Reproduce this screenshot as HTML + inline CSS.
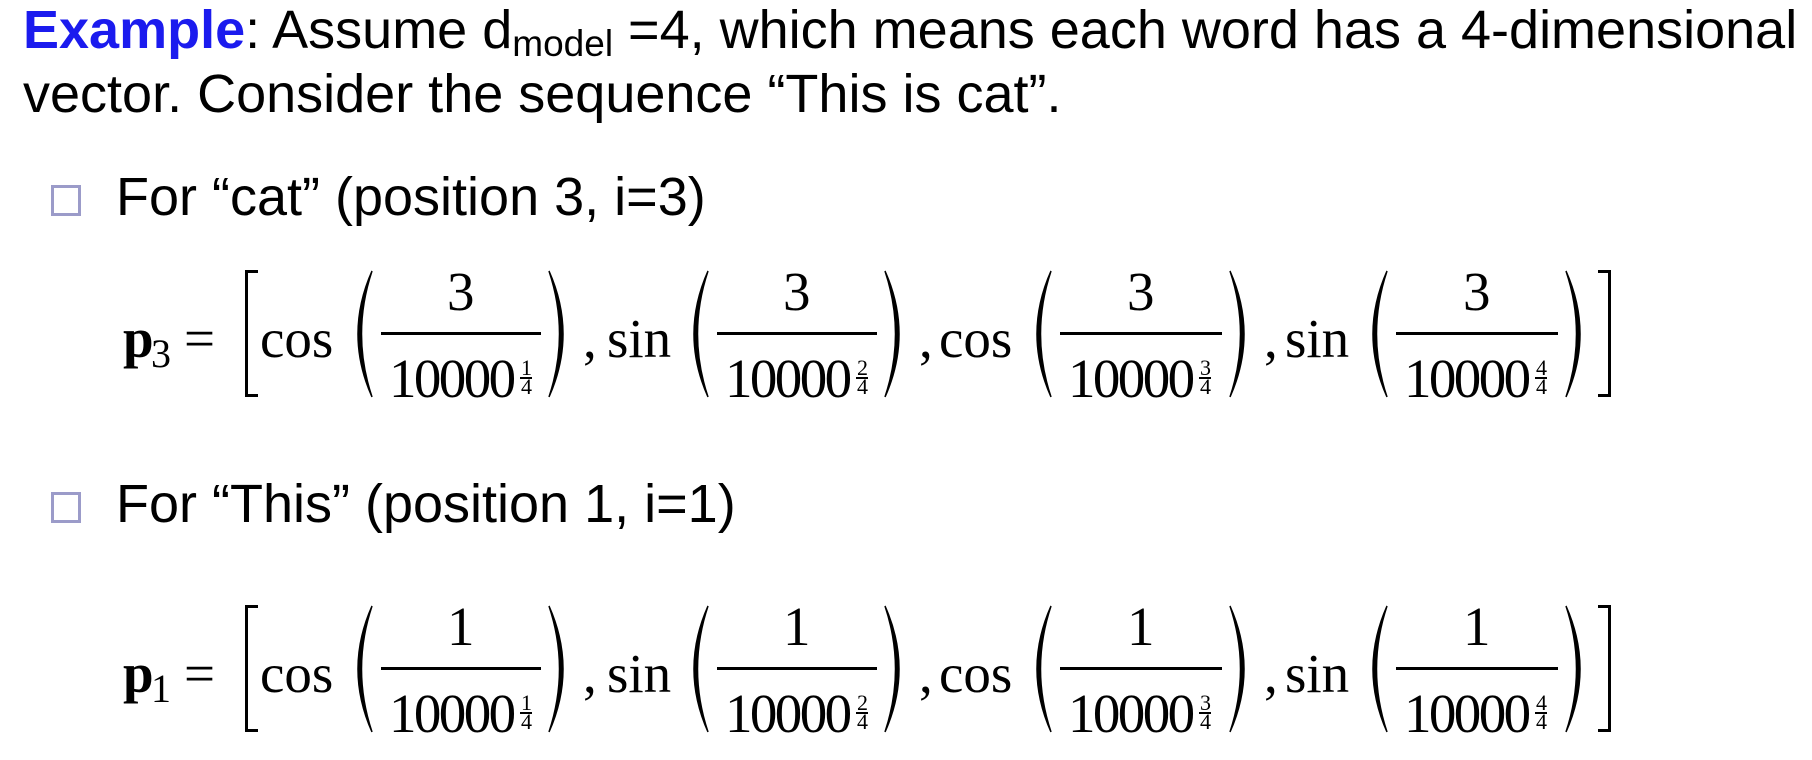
<!DOCTYPE html>
<html><head><meta charset="utf-8"><style>
html,body{margin:0;padding:0;background:#fff;}
body{width:1812px;height:760px;position:relative;overflow:hidden;}
.s{position:absolute;font-family:"Liberation Sans",sans-serif;font-size:54px;line-height:1;color:#000;white-space:nowrap;}
.f{position:absolute;left:0;width:1812px;height:140px;}
.t{position:absolute;font-family:"Liberation Serif",serif;font-size:55px;line-height:1;color:#000;white-space:nowrap;}
.d{letter-spacing:-2.6px;}
.sm{font-size:22px;}
.fl{position:absolute;height:3px;background:#000;top:62px;}
.el{position:absolute;height:1.5px;background:#000;top:107px;width:12px;}
.bl{position:absolute;top:0;height:121px;width:10px;border:3px solid #000;}
.bx{position:absolute;width:24px;height:25px;border:3px solid #9b9bc9;left:51px;}
svg.p{position:absolute;top:0;}
</style></head><body>
<div class="s" style="left:23px;top:3px;"><b style="color:#1b1bee">Example</b>: Assume d<span style="font-size:37px;vertical-align:-8px">model</span> =4, which means each word has a 4-dimensional</div>
<div class="s" style="left:23px;top:67px;">vector. Consider the sequence “This is cat”.</div>

<div class="bx" style="top:185px"></div>
<div class="s" style="left:116px;top:170px;">For “cat” (position 3, i=3)</div>
<div class="bx" style="top:492px"></div>
<div class="s" style="left:116px;top:477px;">For “This” (position 1, i=1)</div>

<div class="f" style="top:270px">
<div class="t" style="left:123px;top:41px;font-weight:bold">p</div>
<div class="t" style="left:151px;top:64px;font-size:40px">3</div>
<div class="t" style="left:184px;top:41px">=</div>
<div class="bl" style="left:245px;border-right:none"></div>
<div class="bl" style="left:1598px;border-left:none"></div>

<div class="t" style="left:260px;top:41px">cos</div>
<svg class="p" style="left:347px" width="28" height="128"><path d="M25,1 Q-3,64 25,127 Q4,64 25,1Z" stroke="#000" stroke-width="1.5" fill="#000"/></svg>
<div class="fl" style="left:381px;width:160px"></div>
<div class="t" style="left:447px;top:-6px">3</div>
<div class="t d" style="left:389px;top:81px">10000</div>
<div class="t sm" style="left:521px;top:87px">1</div><div class="el" style="left:520px"></div><div class="t sm" style="left:521px;top:106px">4</div>
<svg class="p" style="left:546px" width="28" height="128"><path d="M3,1 Q31,64 3,127 Q24,64 3,1Z" stroke="#000" stroke-width="1.5" fill="#000"/></svg>
<div class="t" style="left:583px;top:41px">,</div>

<div class="t" style="left:607px;top:41px">sin</div>
<svg class="p" style="left:683px" width="28" height="128"><path d="M25,1 Q-3,64 25,127 Q4,64 25,1Z" stroke="#000" stroke-width="1.5" fill="#000"/></svg>
<div class="fl" style="left:717px;width:160px"></div>
<div class="t" style="left:783px;top:-6px">3</div>
<div class="t d" style="left:725px;top:81px">10000</div>
<div class="t sm" style="left:857px;top:87px">2</div><div class="el" style="left:856px"></div><div class="t sm" style="left:857px;top:106px">4</div>
<svg class="p" style="left:882px" width="28" height="128"><path d="M3,1 Q31,64 3,127 Q24,64 3,1Z" stroke="#000" stroke-width="1.5" fill="#000"/></svg>
<div class="t" style="left:919px;top:41px">,</div>

<div class="t" style="left:939px;top:41px">cos</div>
<svg class="p" style="left:1026px" width="28" height="128"><path d="M25,1 Q-3,64 25,127 Q4,64 25,1Z" stroke="#000" stroke-width="1.5" fill="#000"/></svg>
<div class="fl" style="left:1060px;width:162px"></div>
<div class="t" style="left:1127px;top:-6px">3</div>
<div class="t d" style="left:1068px;top:81px">10000</div>
<div class="t sm" style="left:1200px;top:87px">3</div><div class="el" style="left:1199px"></div><div class="t sm" style="left:1200px;top:106px">4</div>
<svg class="p" style="left:1227px" width="28" height="128"><path d="M3,1 Q31,64 3,127 Q24,64 3,1Z" stroke="#000" stroke-width="1.5" fill="#000"/></svg>
<div class="t" style="left:1264px;top:41px">,</div>

<div class="t" style="left:1285px;top:41px">sin</div>
<svg class="p" style="left:1362px" width="28" height="128"><path d="M25,1 Q-3,64 25,127 Q4,64 25,1Z" stroke="#000" stroke-width="1.5" fill="#000"/></svg>
<div class="fl" style="left:1396px;width:162px"></div>
<div class="t" style="left:1463px;top:-6px">3</div>
<div class="t d" style="left:1404px;top:81px">10000</div>
<div class="t sm" style="left:1536px;top:87px">4</div><div class="el" style="left:1535px"></div><div class="t sm" style="left:1536px;top:106px">4</div>
<svg class="p" style="left:1563px" width="28" height="128"><path d="M3,1 Q31,64 3,127 Q24,64 3,1Z" stroke="#000" stroke-width="1.5" fill="#000"/></svg>
</div>

<div class="f" style="top:605px">
<div class="t" style="left:123px;top:41px;font-weight:bold">p</div>
<div class="t" style="left:151px;top:64px;font-size:40px">1</div>
<div class="t" style="left:184px;top:41px">=</div>
<div class="bl" style="left:245px;border-right:none"></div>
<div class="bl" style="left:1598px;border-left:none"></div>

<div class="t" style="left:260px;top:41px">cos</div>
<svg class="p" style="left:347px" width="28" height="128"><path d="M25,1 Q-3,64 25,127 Q4,64 25,1Z" stroke="#000" stroke-width="1.5" fill="#000"/></svg>
<div class="fl" style="left:381px;width:160px"></div>
<div class="t" style="left:447px;top:-6px">1</div>
<div class="t d" style="left:389px;top:81px">10000</div>
<div class="t sm" style="left:521px;top:87px">1</div><div class="el" style="left:520px"></div><div class="t sm" style="left:521px;top:106px">4</div>
<svg class="p" style="left:546px" width="28" height="128"><path d="M3,1 Q31,64 3,127 Q24,64 3,1Z" stroke="#000" stroke-width="1.5" fill="#000"/></svg>
<div class="t" style="left:583px;top:41px">,</div>

<div class="t" style="left:607px;top:41px">sin</div>
<svg class="p" style="left:683px" width="28" height="128"><path d="M25,1 Q-3,64 25,127 Q4,64 25,1Z" stroke="#000" stroke-width="1.5" fill="#000"/></svg>
<div class="fl" style="left:717px;width:160px"></div>
<div class="t" style="left:783px;top:-6px">1</div>
<div class="t d" style="left:725px;top:81px">10000</div>
<div class="t sm" style="left:857px;top:87px">2</div><div class="el" style="left:856px"></div><div class="t sm" style="left:857px;top:106px">4</div>
<svg class="p" style="left:882px" width="28" height="128"><path d="M3,1 Q31,64 3,127 Q24,64 3,1Z" stroke="#000" stroke-width="1.5" fill="#000"/></svg>
<div class="t" style="left:919px;top:41px">,</div>

<div class="t" style="left:939px;top:41px">cos</div>
<svg class="p" style="left:1026px" width="28" height="128"><path d="M25,1 Q-3,64 25,127 Q4,64 25,1Z" stroke="#000" stroke-width="1.5" fill="#000"/></svg>
<div class="fl" style="left:1060px;width:162px"></div>
<div class="t" style="left:1127px;top:-6px">1</div>
<div class="t d" style="left:1068px;top:81px">10000</div>
<div class="t sm" style="left:1200px;top:87px">3</div><div class="el" style="left:1199px"></div><div class="t sm" style="left:1200px;top:106px">4</div>
<svg class="p" style="left:1227px" width="28" height="128"><path d="M3,1 Q31,64 3,127 Q24,64 3,1Z" stroke="#000" stroke-width="1.5" fill="#000"/></svg>
<div class="t" style="left:1264px;top:41px">,</div>

<div class="t" style="left:1285px;top:41px">sin</div>
<svg class="p" style="left:1362px" width="28" height="128"><path d="M25,1 Q-3,64 25,127 Q4,64 25,1Z" stroke="#000" stroke-width="1.5" fill="#000"/></svg>
<div class="fl" style="left:1396px;width:162px"></div>
<div class="t" style="left:1463px;top:-6px">1</div>
<div class="t d" style="left:1404px;top:81px">10000</div>
<div class="t sm" style="left:1536px;top:87px">4</div><div class="el" style="left:1535px"></div><div class="t sm" style="left:1536px;top:106px">4</div>
<svg class="p" style="left:1563px" width="28" height="128"><path d="M3,1 Q31,64 3,127 Q24,64 3,1Z" stroke="#000" stroke-width="1.5" fill="#000"/></svg>
</div>
</body></html>
